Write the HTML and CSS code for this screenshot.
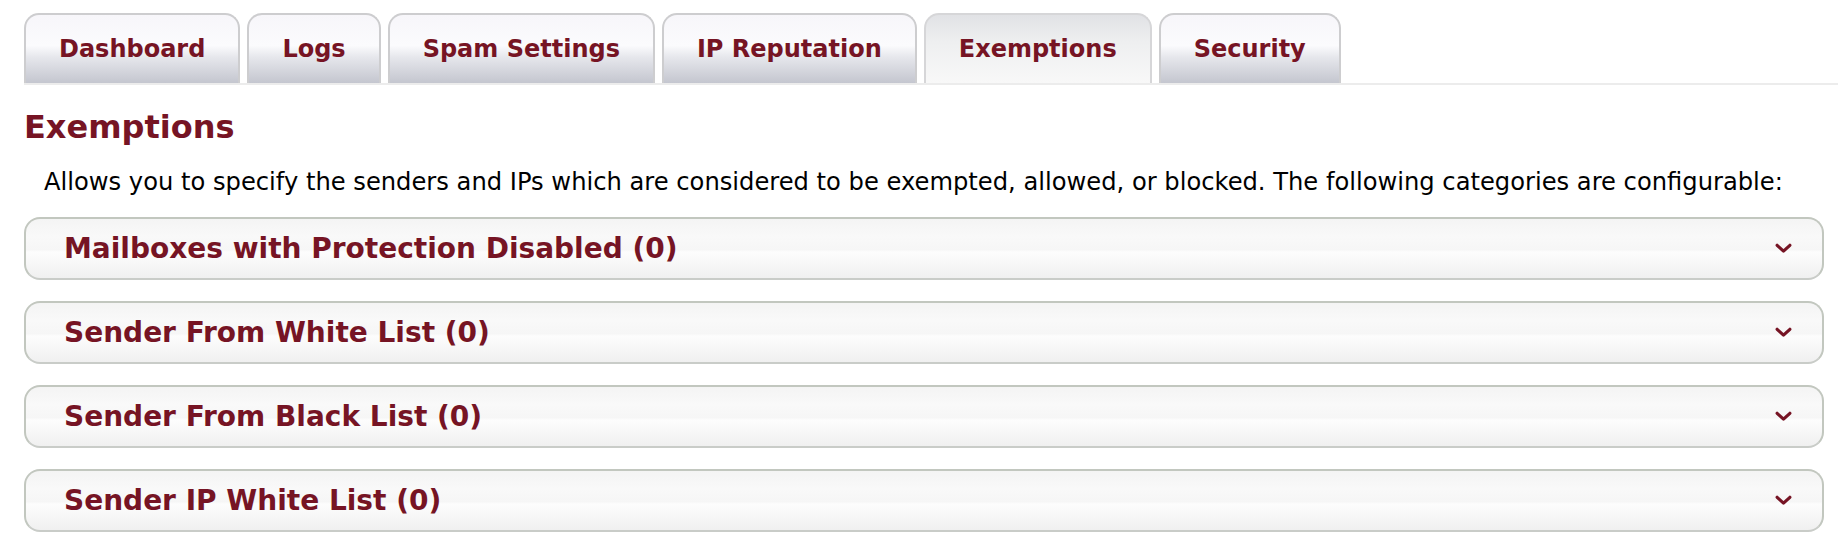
FILE: index.html
```html
<!DOCTYPE html>
<html lang="en">
<head>
  <meta charset="UTF-8" />
  <title>Exemptions</title>
  <link rel="stylesheet" href="styles.css">
</head>
<body>
  <nav class="tabs">
    <a class="tab" href="#">Dashboard</a>
    <a class="tab" href="#">Logs</a>
    <a class="tab" href="#">Spam Settings</a>
    <a class="tab" href="#">IP Reputation</a>
    <a class="tab active" href="#">Exemptions</a>
    <a class="tab" href="#">Security</a>
  </nav>

  <h1 class="page-title">Exemptions</h1>
  <p class="intro">Allows you to specify the senders and IPs which are considered to be exempted, allowed, or blocked. The following categories are configurable:</p>

  <div class="panels">
    <div class="panel">
      <span class="panel-title">Mailboxes with Protection Disabled (0)</span>
      <svg class="chevron" viewBox="0 0 16 10"><path d="M2 2l6 5.5L14 2"/></svg>
    </div>
    <div class="panel">
      <span class="panel-title">Sender From White List (0)</span>
      <svg class="chevron" viewBox="0 0 16 10"><path d="M2 2l6 5.5L14 2"/></svg>
    </div>
    <div class="panel">
      <span class="panel-title">Sender From Black List (0)</span>
      <svg class="chevron" viewBox="0 0 16 10"><path d="M2 2l6 5.5L14 2"/></svg>
    </div>
    <div class="panel">
      <span class="panel-title">Sender IP White List (0)</span>
      <svg class="chevron" viewBox="0 0 16 10"><path d="M2 2l6 5.5L14 2"/></svg>
    </div>
  </div>
</body>
</html>
```

FILE: styles.css
```css
:root {
  --brand: #761424;
  --tab-border: #cdcdcf;
  --line: #ececec;
  --panel-border: #c2c7bf;
}

body {
  margin: 0;
  padding: 13px 14px 0 24px;
  font-family: "DejaVu Sans", Verdana, sans-serif;
  background: #fff;
  color: #000;
}

/* Tabs */
.tabs {
  display: flex;
  align-items: flex-end;
  gap: 7px;
  border-bottom: 2px solid var(--line);
  margin-right: -14px;
}

.tab {
  height: 70px;
  padding: 0 33px;
  display: flex;
  align-items: center;
  box-sizing: border-box;
  border: 2px solid var(--tab-border);
  border-bottom: none;
  border-radius: 15px 15px 0 0;
  background: linear-gradient(to bottom, #f7f6fa 0%, #fbfbfd 45%, #e6e7ec 62%, #c4c6cf 100%);
  color: var(--brand);
  font-weight: bold;
  font-size: 24px;
  text-decoration: none;
  white-space: nowrap;
}

.tab.active {
  background: linear-gradient(to bottom, #e1e2e5 0%, #eeeff0 40%, #f8f8f8 100%);
  border-color: #d6d6d8;
}

/* Heading */
.page-title {
  margin: 22px 0 0 0;
  font-size: 32px;
  line-height: 40px;
  color: var(--brand);
}

.intro {
  margin: 20px 0 0 20px;
  font-size: 24.2px;
  line-height: 30px;
}

/* Collapsible panels */
.panels {
  display: flex;
  flex-direction: column;
  gap: 21px;
  margin-top: 20px;
}

.panel {
  height: 63px;
  box-sizing: border-box;
  display: flex;
  align-items: center;
  justify-content: space-between;
  padding: 0 30px 0 38px;
  border: 2px solid var(--panel-border);
  border-bottom-color: #c9ccc8;
  border-radius: 16px;
  background: linear-gradient(to bottom, #f4f4f4 0%, #f9f9f9 30%, #f6f6f6 52%, #fdfdfd 56%, #f0f0f0 100%);
}

.panel-title {
  color: var(--brand);
  font-weight: bold;
  font-size: 28px;
}

.chevron {
  width: 17px;
  height: 11px;
  fill: none;
  stroke: var(--brand);
  stroke-width: 3;
  stroke-linecap: round;
  stroke-linejoin: round;
}
```
